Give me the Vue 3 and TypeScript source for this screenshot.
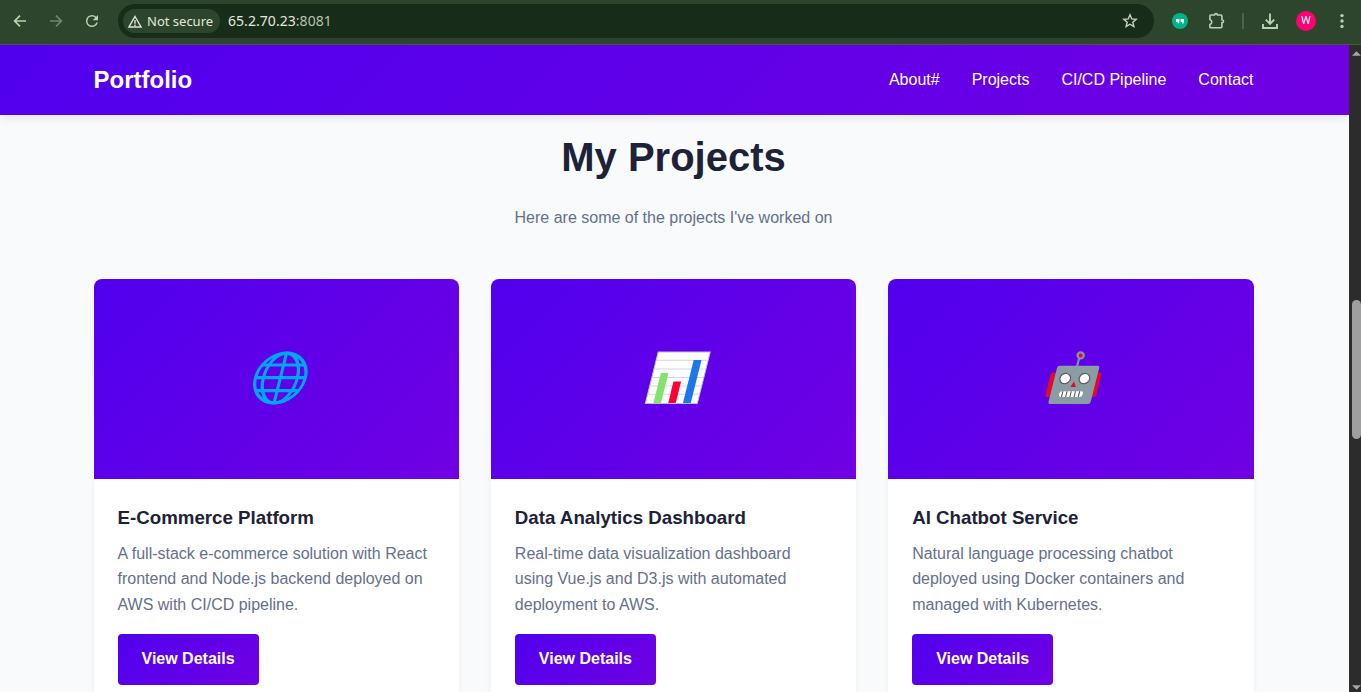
<script setup lang="ts">
interface Project {
  title: string
  description: string
  icon: 'globe' | 'chart' | 'robot'
}

const links: string[] = ['About#', 'Projects', 'CI/CD Pipeline', 'Contact']

const projects: Project[] = [
  {
    title: 'E-Commerce Platform',
    description: 'A full-stack e-commerce solution with React frontend and Node.js backend deployed on AWS with CI/CD pipeline.',
    icon: 'globe',
  },
  {
    title: 'Data Analytics Dashboard',
    description: 'Real-time data visualization dashboard using Vue.js and D3.js with automated deployment to AWS.',
    icon: 'chart',
  },
  {
    title: 'AI Chatbot Service',
    description: 'Natural language processing chatbot deployed using Docker containers and managed with Kubernetes.',
    icon: 'robot',
  },
]

const ruleLines: number[] = [20.3, 29, 37.5, 46, 54.3]
const teeth: number[] = [27, 31.2, 35.4, 39.6, 43.8]
</script>

<template>
  <div class="window">
    <div class="toolbar">
      <svg class="tool back" viewBox="0 0 16 16"><path d="M14 8H3M8 2.6 2.6 8 8 13.4" /></svg>
      <svg class="tool forward" viewBox="0 0 16 16"><path d="M2 8h11M8 2.6 13.4 8 8 13.4" /></svg>
      <svg class="tool reload" viewBox="1.33 1.33 21.33 21.33"><path d="M17.65 6.35A7.96 7.96 0 0 0 12 4a8 8 0 1 0 7.73 10h-2.08A6 6 0 1 1 12 6c1.66 0 3.14.69 4.22 1.78L13 11h7V4z" /></svg>
      <div class="address">
        <div class="chip">
          <svg class="warn" viewBox="0 0 14 13"><path d="M7 1.5 13 12H1zM7 5v3.8M7 9.6v1.3" /></svg>
          <span>Not secure</span>
        </div>
        <span class="url">65.2.70.23<span class="port">:8081</span></span>
        <svg class="star" viewBox="0 0 16 16"><path d="m8 1.8 1.75 4.1 4.45.4-3.37 2.93 1.02 4.35L8 11.27l-3.85 2.31 1.02-4.35L1.8 6.3l4.45-.4z" /></svg>
      </div>
      <svg class="quote" viewBox="0 0 16 16">
        <circle cx="8" cy="8" r="8" fill="#00b487" />
        <path d="M4 6.1h3.4v2.1q0 2-1.7 2.7V9H4zM8.6 6.1H12v2.1q0 2-1.7 2.7V9H8.6z" fill="#fff" />
      </svg>
      <svg class="puzzle" viewBox="0 0 18 18">
        <path d="M2.6 3h3.9q.1-1.4 1.5-1.4T9.5 3h3.4q1 0 1 1v3.8q1.6.1 1.6 1.5t-1.6 1.5v3.9q0 1-1 1H2.6q-.7 0-.7-.7v-2.4a2.6 2.6 0 0 0 0-5V3.7q0-.7.7-.7z" />
      </svg>
      <i class="separator"></i>
      <svg class="download" viewBox="0 0 18 18"><path d="M9 1.5v10M4.8 7.6 9 11.8l4.2-4.2M2 12v4h14v-4" /></svg>
      <span class="avatar">W</span>
      <svg class="dots" viewBox="0 0 4 16"><circle cx="2" cy="2.6" r="1.7" /><circle cx="2" cy="8" r="1.7" /><circle cx="2" cy="13.4" r="1.7" /></svg>
    </div>

    <div class="viewport">
      <div class="page">
        <header class="header">
          <div class="container nav">
            <a class="logo">Portfolio</a>
            <nav class="links">
              <a v-for="link in links" :key="link">{{ link }}</a>
            </nav>
          </div>
        </header>
        <section class="container projects">
          <h2>My Projects</h2>
          <p class="intro">Here are some of the projects I've worked on</p>
          <div class="grid">
            <article v-for="project in projects" :key="project.title" class="card">
              <div class="cover">
                <svg v-if="project.icon === 'globe'" class="art" viewBox="-3.83 0 80 78">
                  <g transform="matrix(1 0 -.25 1 9.5 0)" fill="none" stroke="#00a6f9" stroke-width="3.2">
                    <circle cx="40.5" cy="38" r="24.9" />
                    <ellipse cx="40.5" cy="38" rx="17" ry="24.9" />
                    <path d="M40.5 13v50M19.3 25h42.4M15.6 37.6h49.8M19.3 50.6h42.4" />
                  </g>
                </svg>
                <svg v-else-if="project.icon === 'chart'" class="art" viewBox="-1.5 0 80 78">
                  <g transform="matrix(1 0 -.25 1 16.2 0)">
                    <rect x="10.5" y="12" width="52" height="51.6" fill="#fff" stroke="#b8c3c9" stroke-width="1" />
                    <path v-for="y in ruleLines" :key="y" :d="`M11 ${y}h51`" stroke="#cfd8dc" stroke-width="1.1" />
                    <rect x="18.4" y="33" width="7.6" height="29.9" fill="#83e36b" />
                    <rect x="33.2" y="41.5" width="7.6" height="21.4" fill="#ff0035" />
                    <rect x="48" y="20" width="7.8" height="42.9" fill="#1c77ee" />
                  </g>
                </svg>
                <svg v-else class="art" viewBox="-4.17 0 80 78">
                  <g transform="matrix(1 0 -.25 1 16 0)">
                    <rect x="7.9" y="32.6" width="8" height="24.5" rx="2.5" fill="#dc0d28" />
                    <rect x="52" y="32.6" width="7" height="24.5" rx="2.5" fill="#dc0d28" />
                    <path d="M32.5 18.5V27" stroke="#82969f" stroke-width="2.2" />
                    <rect x="12.8" y="25.7" width="42.2" height="38.3" rx="2.3" fill="#8b9ca5" />
                  </g>
                  <circle cx="45.5" cy="15.4" r="3.1" fill="#dc0d28" stroke="#82969f" stroke-width="2.2" />
                  <g fill="#fff" stroke="#56585b" stroke-width="1.2">
                    <ellipse cx="30" cy="38.6" rx="5.6" ry="4.9" transform="rotate(-35 30 38.6)" />
                    <ellipse cx="49.3" cy="38.6" rx="5.6" ry="4.9" transform="rotate(-35 49.3 38.6)" />
                  </g>
                  <path d="M38.8 41.5 35.2 47h5.5z" fill="#dc0d28" />
                  <g transform="matrix(1 0 -.25 1 13.5 0)">
                    <rect x="24" y="51.2" width="23.6" height="5.7" rx="2.4" fill="#fff" />
                    <path v-for="x in teeth" :key="x" :d="`M${x} 51.2v5.7`" stroke="#56585b" stroke-width="1.1" />
                  </g>
                </svg>
              </div>
              <div class="body">
                <h3>{{ project.title }}</h3>
                <p>{{ project.description }}</p>
                <a class="button">View Details</a>
              </div>
            </article>
          </div>
        </section>
      </div>
      <div class="scrollbar">
        <svg class="arrow" viewBox="0 0 10 5"><path d="M0 5 5 0l5 5z" /></svg>
        <div class="thumb"></div>
        <svg class="arrow down" viewBox="0 0 10 5"><path d="m0 0 5 5 5-5z" /></svg>
      </div>
    </div>
  </div>
</template>

<style>
body {
  margin: 0;
  overflow: hidden;
}
</style>

<style scoped>
* {
  box-sizing: border-box;
}
.window {
  width: 1361px;
  height: 692px;
  overflow: hidden;
  display: flex;
  flex-direction: column;
  font-family: "Liberation Sans", Arial, sans-serif;
}
.toolbar {
  height: 45px;
  flex: none;
  background: #2c452c;
  border-bottom: 1px solid #42583f;
  padding: 0 0 2px 12px;
  display: flex;
  align-items: center;
  font-family: "Noto Sans", sans-serif;
}
.toolbar svg {
  flex: none;
}
.tool {
  width: 16px;
  height: 16px;
  fill: none;
  stroke: #b7d3b1;
  stroke-width: 1.7;
}
.forward {
  margin-left: 20px;
  stroke: #71876e;
}
.reload {
  margin-left: 20px;
  fill: #b7d3b1;
  stroke: none;
}
.address {
  width: 1036px;
  height: 34px;
  margin-left: 18px;
  border-radius: 17px;
  background: #182d19;
  display: flex;
  align-items: center;
  padding: 0 16px 0 5px;
  color: #e2e8dd;
}
.chip {
  width: 97px;
  height: 24px;
  border-radius: 12px;
  background: #2c452c;
  display: flex;
  align-items: center;
  padding-left: 5px;
  gap: 5px;
  font-size: 13px;
  white-space: nowrap;
}
.warn {
  width: 14px;
  height: 13px;
  fill: none;
  stroke: #dce4d7;
  stroke-width: 1.4;
}
.url {
  margin: 0 0 2px 8px;
  font-size: 14px;
  letter-spacing: 0.05px;
}
.port {
  color: #b5c1b1;
}
.star {
  width: 16px;
  height: 16px;
  margin-left: auto;
  fill: none;
  stroke: #c9d4c4;
  stroke-width: 1.4;
}
.quote {
  width: 16px;
  height: 16px;
  margin-left: 18px;
}
.puzzle {
  width: 18px;
  height: 18px;
  margin-left: 20px;
  fill: none;
  stroke: #b7d3b1;
  stroke-width: 1.6;
}
.separator {
  width: 2px;
  height: 16px;
  margin-left: 16px;
  background: #4a6548;
}
.download {
  width: 18px;
  height: 18px;
  margin-left: 17px;
  fill: none;
  stroke: #b7d3b1;
  stroke-width: 1.9;
}
.avatar {
  width: 20px;
  height: 20px;
  margin-left: 17px;
  border-radius: 50%;
  background: #ff0073;
  color: #fff;
  font: 11px/20px Roboto, sans-serif;
  text-align: center;
}
.dots {
  width: 4px;
  height: 16px;
  margin-left: 24px;
  fill: #b7d3b1;
}
.viewport {
  flex: 1;
  min-height: 0;
  display: flex;
}
.page {
  width: 1349px;
  overflow: hidden;
  background: #f8fafc;
  line-height: 1.6;
}
.container {
  width: 1160px;
  margin-left: 93.5px;
}
.header {
  height: 70px;
  background: linear-gradient(135deg, #5000ee, #7000e3);
  box-shadow: 0 2px 10px rgba(0, 0, 0, 0.1);
}
.nav {
  height: 70px;
  display: flex;
  align-items: center;
  justify-content: space-between;
  color: #fff;
}
.logo {
  font-size: 24px;
  font-weight: 700;
}
.links {
  display: flex;
  gap: 32px;
  font-size: 16px;
}
.projects {
  padding-top: 10px;
}
h2 {
  margin: 0 0 16px;
  font-size: 40px;
  line-height: 64px;
  text-align: center;
  color: #1e2238;
}
.intro {
  margin: 0 0 48px;
  text-align: center;
  color: #66708c;
}
.grid {
  display: grid;
  grid-template-columns: repeat(3, 1fr);
  gap: 32px;
}
.card {
  height: 440px;
  overflow: hidden;
  border-radius: 8px;
  background: #fff;
  box-shadow: 0 4px 6px rgba(0, 0, 0, 0.05);
}
.cover {
  height: 200px;
  display: flex;
  align-items: center;
  justify-content: center;
  background: linear-gradient(135deg, #5000ee, #7000e3);
}
.art {
  width: 80px;
  height: 78px;
}
.body {
  padding: 24px;
}
h3 {
  margin: 0 0 8px;
  font-size: 18.72px;
  line-height: 30px;
  color: #1e2238;
}
.body p {
  margin: 0 0 16.8px;
  color: #66708c;
}
.button {
  display: inline-block;
  padding: 12px 24px 12.8px;
  border-radius: 4px;
  background: linear-gradient(135deg, #5000ee, #7000e3);
  color: #fff;
  font-weight: 600;
}
.scrollbar {
  width: 12px;
  background: #2c2c2c;
  display: flex;
  flex-direction: column;
  align-items: flex-end;
  padding: 6px 0 2px;
}
.thumb {
  width: 9px;
  height: 139px;
  margin-top: 244px;
  border-radius: 5px;
  background: #9f9f9f;
}
.arrow {
  width: 9px;
  height: 5px;
  flex: none;
  fill: #a6a6a6;
}
.down {
  margin-top: auto;
}
</style>
